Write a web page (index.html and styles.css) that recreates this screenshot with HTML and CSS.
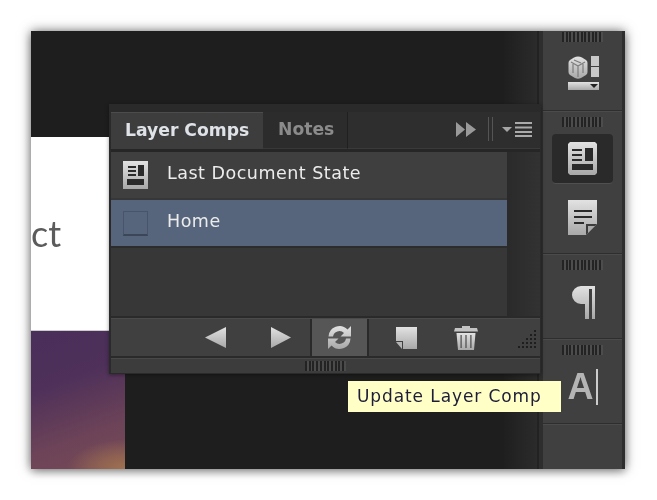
FILE: index.html
```html
<!DOCTYPE html>
<html lang="en">
<head>
<meta charset="utf-8">
<title>Layer Comps</title>
<link rel="stylesheet" href="styles.css">
</head>
<body>
<svg class="defs" width="0" height="0" aria-hidden="true">
  <defs>
    <linearGradient id="g" x1="0" y1="0" x2="0" y2="1"><stop offset="0" stop-color="#e2e2e2"/><stop offset="1" stop-color="#a8a8a8"/></linearGradient>
  </defs>
</svg>
<main class="window">
  <section class="canvas">
    <div class="doc">
      <div class="doc-white"><span class="doc-text">ct</span></div>
      <div class="doc-image"></div>
    </div>
    <div class="canvas-edge"></div>

    <div class="panel">
      <div class="tabs">
        <div class="tab tab-active">Layer Comps</div>
        <div class="tab tab-idle">Notes</div>
        <div class="tab-fill">
          <svg class="ico-collapse" width="20" height="15" viewBox="0 0 20 15"><path d="M0 0l9 7.500-9 7.500zM10 0l10 7.500-10 7.500z" fill="#999"/></svg>
          <div class="tab-sep"></div>
          <svg class="ico-menu" width="30" height="15" viewBox="0 0 30 15"><path d="M0 5h10l-5 5z" fill="#a5a5a5"/><path d="M13 0h17v2H13zM13 4.500h17v2H13zM13 9h17v2H13zM13 13h17v2H13z" fill="#aaa"/></svg>
        </div>
      </div>
      <div class="panel-body">
        <div class="list">
          <div class="row">
            <svg class="row-icon" width="25" height="28" viewBox="0 0 25 28"><path d="M0 0h25v28H0z" fill="url(#g)"/><path d="M5 5h8v2H5zM5 9h8v2H5zM5 13h8v2H5zM15 4h6v11h-6zM4 18h17v6H4z" fill="#2a2a2a"/></svg>
            <span class="row-label">Last Document State</span>
          </div>
          <div class="row row-selected">
            <span class="swatch"></span>
            <span class="row-label">Home</span>
          </div>
        </div>
        <div class="strip"></div>
      </div>
      <div class="toolbar">
        <div class="tool-group">
          <svg width="21" height="21" viewBox="0 0 21 21"><path d="M21 0v21L0 10.500z" fill="url(#g)"/></svg>
          <svg width="20" height="21" viewBox="0 0 20 21"><path d="M0 0v21l20-10.500z" fill="url(#g)"/></svg>
        </div>
        <div class="tool-active">
          <svg width="27" height="27" viewBox="0 0 27 27"><path d="M2.500 12.500A11 11 0 0 1 21.500 5.500L25 2v10.500H14.500l3.500-3.500A6.500 6.500 0 0 0 7 12.500zM24.500 14.500A11 11 0 0 1 5.500 21.500L2 25V14.500h10.500L9 18A6.500 6.500 0 0 0 20 14.500z" fill="url(#g)"/></svg>
        </div>
        <div class="tool-rest">
          <svg width="21" height="22" viewBox="0 0 21 22"><path d="M0 0h21v22H7v-8H0z" fill="url(#g)"/><path d="M0 15h6v7z" fill="#b5b5b5"/></svg>
          <svg width="24" height="25" viewBox="0 0 24 25"><path d="M8 3V1h8v2h7l1 3.500H0L1 3z" fill="#c4c4c4"/><path d="M2.500 8h19l-1.500 17H4z" fill="url(#g)"/><path d="M6.500 10h1.200v13H6.500zM11.400 10h1.200v13h-1.200zM16.300 10h1.200v13h-1.200z" fill="#4a4a4a"/></svg>
          <svg class="t-grip" width="21" height="21" viewBox="0 0 21 21"><path d="M18 0h2v2h-2zM18 4h2v2h-2zM14 4h2v2h-2zM18 8h2v2h-2zM14 8h2v2h-2zM10 8h2v2h-2zM18 12h2v2h-2zM14 12h2v2h-2zM10 12h2v2h-2zM6 12h2v2H6zM18 16h2v2h-2zM14 16h2v2h-2zM10 16h2v2h-2zM6 16h2v2H6zM2 16h2v2H2z" fill="#1e1e1e"/></svg>
        </div>
      </div>
      <div class="panel-foot"><span class="grip"></span></div>
    </div>
  </section>

  <aside class="dock">
    <div class="dock-sec sec-a">
      <span class="grip"></span>
      <svg class="d-ico" width="33" height="34" viewBox="0 0 33 34"><path d="M7 1.500Q11 -.5 15 1.500L19 4Q20.500 5 20.500 7V16Q20.500 18 19 19L14 22Q11 23.500 8 22L3 19Q1.500 18 1.500 16V7Q1.500 5 3 4z" fill="url(#g)"/><path d="M11 10L4 6M11 10l7-4M11 10v11M7 4l7 3M6 8v9M16 8v9" stroke="#7c7c7c" stroke-width="1.200" fill="none"/><path d="M24 0h8v10h-8zM24 11h8v10h-8z" fill="#c8c8c8"/><path d="M1 26h31v8H1z" fill="url(#g)"/><path d="M23 28h8l-4 4z" fill="#222"/></svg>
    </div>
    <div class="dock-sec sec-b">
      <span class="grip"></span>
      <div class="d-btn d-btn-on">
        <svg width="29" height="33" viewBox="0 0 29 33"><path d="M2 0h25l2 2v29l-2 2H2l-2-2V2z" fill="url(#g)"/><path d="M4 7h10v2H4zM4 12h10v2H4zM4 17h10v2H4zM17 6h8v13h-8zM4 22h21v6H4z" fill="#2a2a2a"/></svg>
      </div>
      <div class="d-btn">
        <svg width="29" height="35" viewBox="0 0 29 35"><path d="M0 0h29v24L18 35H0z" fill="url(#g)"/><path d="M6 10h18v2H6zM6 16h18v2H6zM6 22h10v2H6z" fill="#2a2a2a"/><path d="M18 35V24h11z" fill="#3c3c3c"/><path d="M20 33v-7h7z" fill="#aaa"/></svg>
      </div>
    </div>
    <div class="dock-sec sec-c">
      <span class="grip"></span>
      <svg class="d-ico" width="23" height="33" viewBox="0 0 23 33"><path d="M9 0h14v33h-3V3h-3v30h-4V18H9A9 9 0 0 1 9 0z" fill="url(#g)"/></svg>
    </div>
    <div class="dock-sec sec-d">
      <span class="grip"></span>
      <div class="d-type"><span class="d-a">A</span><span class="d-cursor"></span></div>
    </div>
    <div class="dock-sec sec-e"></div>
  </aside>
</main>
<div class="tooltip">Update Layer Comp</div>
</body>
</html>
```

FILE: styles.css
```css
html, body {
  margin: 0;
  padding: 0;
  background: #fff;
  width: 657px;
  height: 500px;
  overflow: hidden;
}
.defs { position: absolute; }
.window {
  margin: 31px 0 0 31px;
  width: 594px;
  height: 438px;
  display: flex;
  background: #1e1e1e;
  box-shadow: 0 0 11px rgba(0, 0, 0, .55), 0 3px 8px rgba(0, 0, 0, .2);
  filter: blur(.45px);
}
.canvas {
  position: relative;
  width: 508px;
  flex: none;
  padding-top: 106px;
  box-sizing: border-box;
  background: #1e1e1e;
}
.canvas-edge {
  position: absolute;
  left: 473px;
  top: 0;
  bottom: 0;
  width: 35px;
  background: linear-gradient(90deg, #1f1f1f, #2b2b2b);
  border-right: 2px solid #222;
  box-sizing: border-box;
}
.doc { width: 94px; }
.doc-white {
  height: 194px;
  background: #fff;
  overflow: hidden;
  position: relative;
  border-bottom: 1px solid #ccc;
  box-sizing: border-box;
}
.doc-text {
  position: absolute;
  left: 0;
  top: 74px;
  font: 36px/44px "Lato", sans-serif;
  color: #5c5c5c;
}
.doc-image {
  height: 138px;
  background:
    radial-gradient(ellipse 58px 30px at 100% 100%, #a0724f 0, rgba(160, 114, 79, .55) 50%, rgba(160, 114, 79, 0) 100%),
    linear-gradient(160deg, #4a2f5a 0, #4e305a 35%, #6c4358 72%, #774a56 100%);
}
.panel {
  position: absolute;
  left: 78px;
  top: 73px;
  width: 432px;
  height: 270px;
  box-sizing: border-box;
  background: #2a2a2a;
  padding: 8px 1px 1px 2px;
  display: flex;
  flex-direction: column;
  box-shadow: 0 1px 4px rgba(0, 0, 0, .4);
  font-family: "DejaVu Sans", sans-serif;
}
.tabs {
  display: flex;
  height: 37px;
  flex: none;
}
.tab {
  box-sizing: border-box;
  font-weight: 700;
  font-size: 17.200px;
  line-height: 35px;
  flex: none;
  white-space: nowrap;
}
.tab-active {
  width: 152px;
  padding-left: 14px;
  color: #dfe3e8;
  background: #3d3d3d;
  border-top: 1px solid #4c4c4c;
  height: 37px;
}
.tab-idle {
  width: 85px;
  padding-left: 15px;
  color: #8b8b8b;
  background: #2c2c2c;
  border-right: 1px solid #202020;
  border-bottom: 1px solid #383838;
}
.tab-fill {
  flex: 1;
  background: #2e2e2e;
  border-bottom: 1px solid #3a3a3a;
  display: flex;
  align-items: center;
  padding-left: 108px;
  padding-bottom: 2px;
}
.ico-collapse { margin-right: 12px; }
.tab-sep {
  width: 5px;
  height: 24px;
  box-sizing: border-box;
  border-left: 1px solid #555;
  border-right: 1px solid #555;
  margin-right: 9px;
}
.panel-body {
  flex: none;
  height: 167px;
  display: flex;
  padding-top: 3px;
  background: #262626;
  box-sizing: border-box;
}
.list {
  width: 396px;
  flex: none;
  background: #373737;
  display: flex;
  flex-direction: column;
  gap: 2px;
}
.strip {
  flex: 1;
  background: linear-gradient(90deg, #2a2a2a, #323232);
}
.row {
  height: 46px;
  background: #3f3f3f;
  display: flex;
  align-items: center;
  padding-left: 12px;
  gap: 19px;
  color: #ececec;
  font-size: 17.500px;
  letter-spacing: .5px;
}
.row-label { padding-bottom: 5px; }
.row-selected { background: #56657c; box-shadow: 0 2px 0 #2c2c2c; }
.row-selected .row-label { padding-bottom: 4px; }
.row-icon { flex: none; }
.swatch {
  width: 25px;
  height: 25px;
  box-sizing: border-box;
  border: 1px solid #47546a;
  border-bottom: 2px solid #3b4658;
}
.toolbar {
  flex: none;
  height: 38px;
  margin-top: 2px;
  display: flex;
  background: #404040;
  border-top: 1px solid #4a4a4a;
  box-sizing: border-box;
}
.tool-group {
  width: 201px;
  flex: none;
  display: flex;
  align-items: center;
  padding-left: 94px;
  box-sizing: border-box;
  gap: 45px;
  border-right: 2px solid #2a2a2a;
}
.tool-active {
  width: 57px;
  flex: none;
  background: #565656;
  display: flex;
  align-items: center;
  justify-content: center;
  box-sizing: border-box;
  border-right: 2px solid #2a2a2a;
}
.tool-rest {
  flex: 1;
  min-width: 0;
  display: flex;
  align-items: center;
  padding-left: 27px;
  gap: 37px;
}
.t-grip { margin: 6px 0 0 1px; }
.panel-foot {
  flex: none;
  height: 15px;
  margin-top: 2px;
  background: #3c3c3c;
  border-top: 1px solid #484848;
  box-sizing: border-box;
  display: flex;
  justify-content: center;
  align-items: center;
}
.grip {
  display: block;
  width: 41px;
  height: 10px;
  flex: none;
  background: repeating-linear-gradient(90deg, #232323 0 2px, rgba(90, 90, 90, .5) 2px 3.700px);
}
.dock {
  flex: 1;
  box-sizing: border-box;
  background: #2e2e2e;
  padding: 0 3px 0 4px;
  display: flex;
  flex-direction: column;
  gap: 1px;
}
.dock-sec {
  background: #404040;
  display: flex;
  flex-direction: column;
  align-items: center;
  border-top: 1px solid #4b4b4b;
  box-sizing: border-box;
}
.sec-a { height: 79px; padding-top: 1px; border-top: 0; }
.sec-b { height: 142px; padding-top: 5px; }
.sec-c { height: 84px; padding-top: 5px; }
.sec-d { height: 84px; padding-top: 5px; }
.sec-e { flex: 1; }
.d-ico { margin-top: 14px; margin-left: 2px; }
.sec-c .d-ico { margin-top: 16px; }
.d-btn {
  width: 61px;
  height: 50px;
  margin-top: 7px;
  display: flex;
  align-items: center;
  justify-content: center;
  box-sizing: border-box;
  border-radius: 4px;
}
.d-btn + .d-btn { margin-top: 8px; }
.d-btn-on {
  background: #2a2a2a;
  border-bottom: 1px solid #505050;
}
.d-type {
  margin-top: 14px;
  display: flex;
  align-items: center;
  gap: 2px;
}
.d-a {
  font: 700 36px/36px "Liberation Sans", sans-serif;
  color: #b4b4b4;
}
.d-cursor {
  width: 2px;
  height: 36px;
  background: #ccc;
}
.tooltip {
  position: absolute;
  left: 348px;
  top: 381px;
  width: 213px;
  height: 31px;
  box-sizing: border-box;
  padding-left: 9px;
  background: #ffffc6;
  color: #1d1d3a;
  font: 17px/30px "DejaVu Sans", sans-serif;
  letter-spacing: .9px;
  white-space: nowrap;
  filter: blur(.35px);
}
```
